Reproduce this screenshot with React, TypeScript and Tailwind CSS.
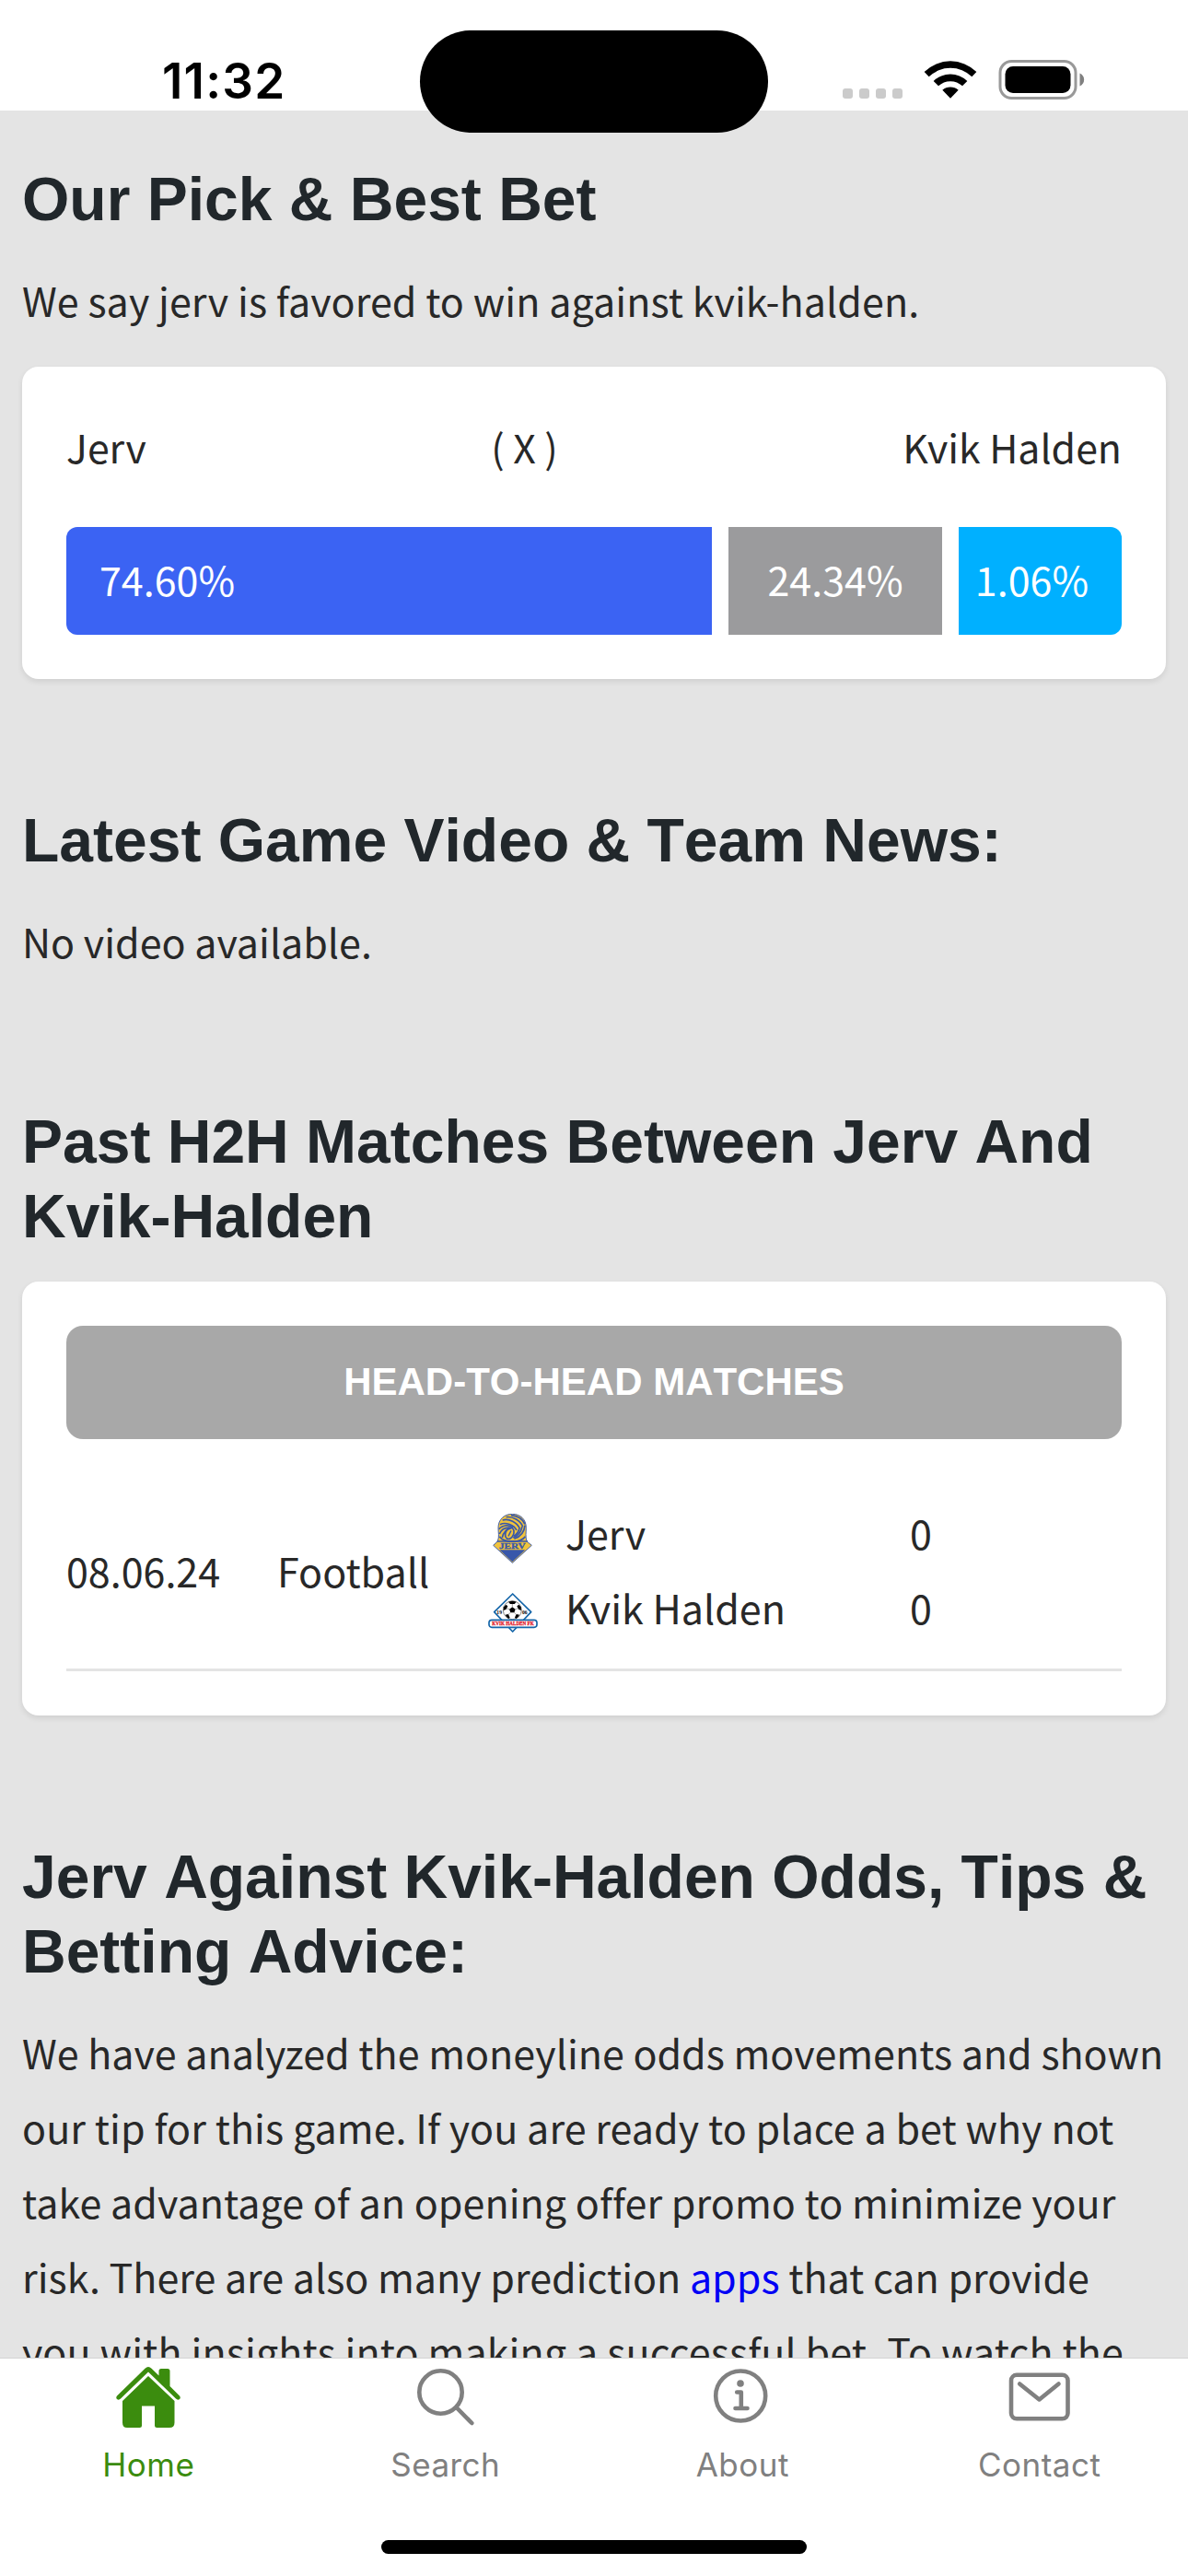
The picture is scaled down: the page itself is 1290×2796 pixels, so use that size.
import React from "react";

const bodyFont = "font-['Noto_Sans_CJK_SC',sans-serif]";
const headingFont = "font-['Liberation_Sans',sans-serif] [font-kerning:none]";

const StatusBar: React.FC = () => {
  return (
    <header className="relative flex h-[120px] shrink-0 justify-between bg-white pl-[176px] pr-[112px]">
      <span className="pt-[57px] font-['Inter',sans-serif] text-[53px] leading-[62px] font-semibold tracking-[1.2px] text-black">
        11:32
      </span>
      <div className="absolute top-[33px] left-[456px] z-10 h-[111px] w-[378px] rounded-full bg-black"></div>
      <div className="flex items-start pt-[65px]">
        <div className="mt-[31px] mr-[23px] flex gap-[7px]">
          {[0, 1, 2, 3].map((dot) => (
            <i key={dot} className="h-[11px] w-[11px] rounded-[3px] bg-[#cbcbcb]"></i>
          ))}
        </div>
        <svg className="mt-[-1px] mr-[22px] h-[44px] w-[58px]" viewBox="0 0 174 132">
          <path d="M2 42 A121 121 0 0 1 172 42 L157 58 A100 100 0 0 0 17 58 Z" />
          <path d="M32 72 A79 79 0 0 1 142 72 L126 88 A57 57 0 0 0 48 88 Z" />
          <path d="M61 101 A40 40 0 0 1 113 101 L87 128 Z" />
        </svg>
        <svg className="h-[43px] w-[95px]" viewBox="0 0 95 43">
          <rect x="3" y="1.5" width="82" height="40" rx="12.5" fill="none" stroke="#999" strokeWidth="3" />
          <rect x="8.500" y="7" width="71" height="29" rx="8.500" />
          <path d="M89.500 14.500 C95.700 17 95.700 26 89.500 28.500 Z" fill="#808080" />
        </svg>
      </div>
    </header>
  );
};

const Heading: React.FC<{ children: React.ReactNode }> = ({ children }) => (
  <h2 className={`${headingFont} text-[66px] leading-[81px] font-bold whitespace-nowrap text-[#21272b]`}>
    {children}
  </h2>
);

const Card: React.FC<{ className: string; children: React.ReactNode }> = ({
  className,
  children,
}) => (
  <div
    className={`rounded-[18px] bg-white p-12 shadow-[0_3px_6px_rgba(0,0,0,0.09)] ${className}`}
  >
    {children}
  </div>
);

const JervLogo: React.FC = () => (
  <svg className="h-[54px] w-[43px]" viewBox="0 0 129 162">
    <path d="M18 46 C18 18 38 1 64 1 C90 1 109 18 109 46 C109 62 106 74 111 90 L127 103 L64 160 L2 103 L16 90 C22 74 18 62 18 46 Z" fill="#f0c33c" stroke="#4763a8" strokeWidth="3" />
    <g fill="none" stroke="#3857aa" strokeWidth="5">
      <path d="M24 35 C42 26 70 36 78 54" />
      <path d="M32 21 C53 14 80 29 88 48" />
      <path d="M44 11 C66 8 90 23 98 42" />
      <path d="M60 5 C80 7 97 16 105 34" />
      <path d="M20 50 C34 36 52 36 66 44" />
      <path d="M22 66 C30 48 42 44 58 46" />
      <path d="M31 78 C35 60 46 50 60 47" />
      <path d="M105 38 C103 61 90 75 70 82" />
      <path d="M96 42 C92 60 82 72 67 78" />
      <path d="M87 48 C84 60 78 68 68 73" />
      <ellipse cx="55" cy="64" rx="13" ry="19" transform="rotate(24 55 64)" />
      <path d="M51 73 L60 55" strokeWidth="4" />
      <path d="M22 74 C38 96 91 96 106 74" />
      <path d="M14 90 H114" />
    </g>
    <text x="64" y="113" textAnchor="middle" textLength="86" lengthAdjust="spacingAndGlyphs" fontSize="26" fontWeight="700" fontFamily="Liberation Serif, serif" fill="#3857aa" stroke="#3857aa" strokeWidth="1">
      JERV
    </text>
    <path d="M22 118 H106 L64 157 Z" fill="#3857aa" />
  </svg>
);

const KvikLogo: React.FC = () => (
  <svg className="h-[43px] w-[54px]" viewBox="0 0 162 129">
    <path d="M80 3 L140 62 L80 126 L20 62 Z" fill="#fff" stroke="#1566a9" strokeWidth="5" strokeLinejoin="round" />
    <circle cx="79" cy="56" r="30" fill="#fff" stroke="#444" strokeWidth="2" />
    <path d="M79 46 L89 53 L85 64 H73 L69 53 Z" />
    <path d="M66 29 Q79 23 92 29 L86 36 H72 Z" />
    <path d="M51 46 L58 38 L64 43 L59 53 L50 57 Z" />
    <path d="M107 46 L100 38 L94 43 L99 53 L108 57 Z" />
    <path d="M56 71 L66 69 L71 80 L67 84 Q60 80 56 71 Z" />
    <path d="M102 71 L92 69 L87 80 L91 84 Q98 80 102 71 Z" />
    <path d="M79 46 V36 M89 53 L99 50 M85 64 L92 70 M73 64 L66 70 M69 53 L59 50" stroke="#777" strokeWidth="2" />
    <g fontFamily="Liberation Serif, serif" fontSize="17" fontWeight="700">
      <text x="28" y="68">19</text>
      <text x="111" y="68">06</text>
    </g>
    <rect x="3" y="88" width="156" height="24" rx="9" fill="#fff" stroke="#1566a9" strokeWidth="5" />
    <text x="81" y="106" textAnchor="middle" textLength="136" lengthAdjust="spacingAndGlyphs" fontSize="16" fontWeight="700" fontFamily="Liberation Serif, serif" fill="#e01b2c" stroke="#e01b2c" strokeWidth="0.8">
      KVIK HALDEN FK
    </text>
  </svg>
);

const HomeIcon: React.FC = () => (
  <svg className="h-[66px] w-[70px]" viewBox="0 0 70 66" fill="currentColor">
    <path d="M46.500 9.500 V4.500 Q46.500 2 49 2 H56 Q58.500 2 58.500 4.500 V21 L69 31.500 Q70.500 33.500 69 35 Q67 36.500 65 34.500 L35 5.500 L5 34.500 Q3 36.500 1 35 Q-0.500 33.500 1 31.500 L31.500 1.700 Q35 -1.500 38.500 1.700 Z" />
    <path d="M35 10 L63.500 37 V60.500 Q63.500 66 58 66 H44.500 Q42 66 42 63.500 V42.500 H28 V63.500 Q28 66 25.500 66 H12 Q7 66 7 60.500 V37 Z" />
  </svg>
);

const SearchIcon: React.FC = () => (
  <svg className="h-[66px] w-[70px]" viewBox="0 0 70 66" fill="none" stroke="currentColor" strokeWidth="4.600" strokeLinecap="round">
    <circle cx="29.500" cy="27.500" r="23.200" />
    <path d="M47 44.500 L63.300 61" />
  </svg>
);

const AboutIcon: React.FC = () => (
  <svg className="h-[66px] w-[70px]" viewBox="0 0 70 66" fill="none" stroke="currentColor" strokeWidth="4.600" strokeLinecap="round" strokeLinejoin="round">
    <circle cx="33.200" cy="31.500" r="27" />
    <circle cx="33" cy="18" r="3.800" fill="currentColor" stroke="none" />
    <path d="M29.200 27.500 H33.800 V44.800 M27.500 45 H40.500" />
  </svg>
);

const ContactIcon: React.FC = () => (
  <svg className="h-[66px] w-[70px]" viewBox="0 0 70 66" fill="none" stroke="currentColor" strokeWidth="4.600" strokeLinecap="round" strokeLinejoin="round">
    <rect x="4" y="8.800" width="61.500" height="47.500" rx="6" />
    <path d="M13.200 18.500 L34.500 35.500 L55.500 18.500" />
  </svg>
);

const tabs = [
  { label: "Home", icon: <HomeIcon />, color: "text-[#3b8c0e]" },
  { label: "Search", icon: <SearchIcon />, color: "text-[#808080]" },
  { label: "About", icon: <AboutIcon />, color: "text-[#808080]" },
  { label: "Contact", icon: <ContactIcon />, color: "text-[#808080]" },
];

const App: React.FC = () => {
  return (
    <div className={`${bodyFont} flex h-[2796px] w-[1290px] flex-col overflow-hidden bg-[#e4e4e4] text-[43px] leading-[81px] text-[#282828] [font-variant-ligatures:none]`}>
      <StatusBar />

      <main className="h-[2439px] shrink-0 overflow-hidden px-6 pt-14">
        <section>
          <Heading>Our Pick &amp; Best Bet</Heading>
          <p className="mt-7 tracking-[0.07px]">We say jerv is favored to win against kvik-halden.</p>
          <Card className="mt-8 h-[339px] pt-[46px]">
            <div className="flex justify-between text-[42.8px]">
              <span>Jerv</span>
              <span>( X )</span>
              <span>Kvik Halden</span>
            </div>
            <div className="mt-[47px] flex h-[117px] gap-[18px] leading-[113px] text-white">
              <div className="w-[701px] rounded-l-xl bg-[#3b63f3] pl-9">74.60%</div>
              <div className="w-[232px] bg-[#9b9b9d] text-center">24.34%</div>
              <div className="w-[177px] rounded-r-xl bg-[#00b0ff] pr-9 text-right">1.06%</div>
            </div>
          </Card>
        </section>

        <section className="mt-[135px]">
          <Heading>Latest Game Video &amp; Team News:</Heading>
          <p className="mt-7">No video available.</p>
        </section>

        <section className="mt-[137px]">
          <Heading>
            Past H2H Matches Between Jerv And
            <br />
            Kvik-Halden
          </Heading>
          <Card className="mt-[30px] h-[471px]">
            <h3 className={`${headingFont} h-[123px] rounded-[18px] bg-[#a8a8a8] text-center text-[42px] leading-[122px] font-bold text-white`}>
              HEAD-TO-HEAD MATCHES
            </h3>
            <div className="mt-[61px] flex items-center border-b-3 border-[#e4e4e4] pb-[26px]">
              <span className="w-[229px]">08.06.24</span>
              <span className="w-[227px]">Football</span>
              <div className="w-[460px]">
                <div className="flex items-center">
                  <span className="flex w-[86px] pt-3 pl-[7px]"><JervLogo /></span>
                  Jerv
                </div>
                <div className="flex items-center">
                  <span className="flex w-[86px] pt-3 pl-[2px]"><KvikLogo /></span>
                  Kvik Halden
                </div>
              </div>
              <div className="flex flex-col">
                <span>0</span>
                <span>0</span>
              </div>
            </div>
          </Card>
        </section>

        <section className="mt-[135px]">
          <Heading>
            Jerv Against Kvik-Halden Odds, Tips &amp;
            <br />
            Betting Advice:
          </Heading>
          <p className="mt-7 whitespace-nowrap">
            We have analyzed the moneyline odds movements and shown
            <br />
            <span className="tracking-[0.08px]">our tip for this game. If you are ready to place a bet why not</span>
            <br />
            <span className="tracking-[0.05px]">take advantage of an opening offer promo to minimize your</span>
            <br />
            risk. There are also many prediction{" "}
            <a className="text-[#0000f5]">apps</a> that can provide
            <br />
            <span className="tracking-[0.13px]">you with insights into making a successful bet. To watch the</span>
          </p>
        </section>
      </main>

      <footer className="flex grow flex-col items-center border-t border-[#d4d4d4] bg-white">
        <nav className="flex w-full pt-[9px]">
          {tabs.map((tab) => (
            <div key={tab.label} className={`flex flex-1 flex-col items-center ${tab.color}`}>
              {tab.icon}
              <span className="mt-[18px] font-['Inter',sans-serif] text-[35px] leading-[44px] tracking-[0.5px]">
                {tab.label}
              </span>
            </div>
          ))}
        </nav>
        <div className="mt-[60px] h-[15px] w-[462px] rounded-full bg-black"></div>
      </footer>
    </div>
  );
};

export default App;
